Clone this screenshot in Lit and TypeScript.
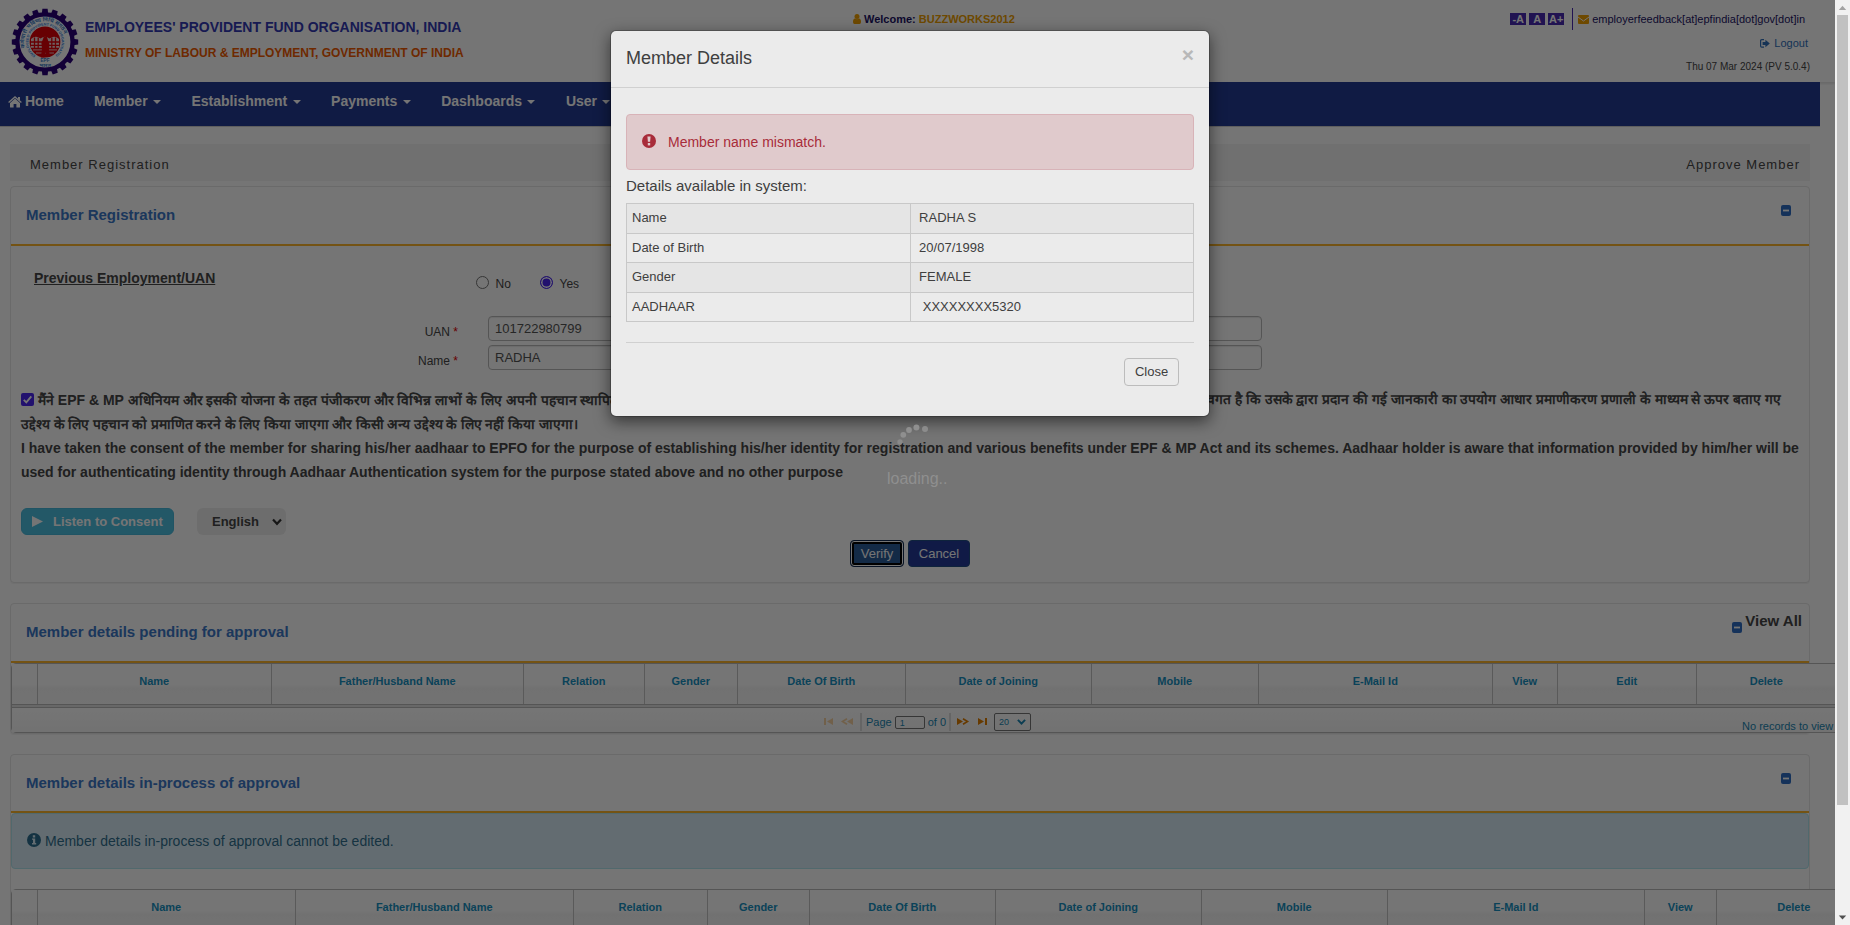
import { LitElement, html, svg, css } from "lit";
import { customElement } from "lit/decorators.js";

type Col = { label: string; w: number };

const MENU = ["Member", "Establishment", "Payments", "Dashboards", "User"];

const PENDING: Col[] = [
  { label: "", w: 26 }, { label: "Name", w: 234 }, { label: "Father/Husband Name", w: 252 },
  { label: "Relation", w: 121 }, { label: "Gender", w: 93 }, { label: "Date Of Birth", w: 168 },
  { label: "Date of Joining", w: 186 }, { label: "Mobile", w: 167 }, { label: "E-Mail Id", w: 234 },
  { label: "View", w: 65 }, { label: "Edit", w: 139 }, { label: "Delete", w: 140 },
];

const IN_PROCESS: Col[] = [
  { label: "", w: 26 }, { label: "Name", w: 258 }, { label: "Father/Husband Name", w: 278 },
  { label: "Relation", w: 134 }, { label: "Gender", w: 102 }, { label: "Date Of Birth", w: 186 },
  { label: "Date of Joining", w: 206 }, { label: "Mobile", w: 186 }, { label: "E-Mail Id", w: 257 },
  { label: "View", w: 72 }, { label: "Delete", w: 155 },
];

const DETAILS: [string, string][] = [
  ["Name", "RADHA S"],
  ["Date of Birth", "20/07/1998"],
  ["Gender", "FEMALE"],
  ["AADHAAR", "\u00a0XXXXXXXX5320"],
];

const minus = html`<svg class="minus" width="10" height="11" viewBox="0 0 10 11"><rect width="10" height="11" rx="2" fill="#2e6fc4"/><rect x="2" y="4.6" width="6" height="1.8" fill="#fff"/></svg>`;
const chevron = (w: number, c: string) => html`<svg class="chev" width=${w} height="8" viewBox="0 0 10 8"><path d="M1 1.6 5 5.8 9 1.6" fill="none" stroke=${c} stroke-width="2.2"/></svg>`;

@customElement("epf-logo")
export class EpfLogo extends LitElement {
  static styles = css`
    :host { display: block; width: 68px; height: 68px; }
    svg { display: block; font-family: "Liberation Sans", "Noto Sans", sans-serif; }
  `;
  render() {
    const teeth = Array.from({ length: 20 }, (_, i) => svg`<path d="M-3.2 -28 -2.6 -33.2H2.6L3.2 -28Z" transform="rotate(${i * 18})" fill="#2a0079"/>`);
    return html`<svg width="68" height="68" viewBox="-34 -34 68 68">
      ${teeth}
      <circle r="27.6" fill="#fff" stroke="#2a0079" stroke-width="4.4"/>
      <defs>
        <path id="outer" d="M-19.2 8A20.8 20.8 0 1 1 19.2 8"/>
        <path id="inner" d="M-9.5 13.6A16.6 16.6 0 1 1 9.5 13.6"/>
      </defs>
      <text font-size="5.6" font-weight="bold" fill="#3f7fc9"><textPath href="#outer" startOffset="3%">कर्मचारी भविष्य निधि संगठन</textPath></text>
      <text font-size="3.6" font-weight="bold" fill="#2f7fe0"><textPath href="#inner">EMPLOYEES' PROVIDENT FUND ORGANISATION</textPath></text>
      <circle r="15.4" fill="#e00008"/>
      <path d="M-14 -3Q-9.5 -7 -4.5 -3.5Q0 -7 4.5 -3.5Q9.5 -7 14 -3V6H-14Z" fill="#f1d5d5"/>
      <path d="M-14 0H14M-14 3.4H14M-10.5 -4.4V6M-6.8 -4.4V6M6.8 -4.4V6M10.5 -4.4V6M-14 6.4H14M-11 9.4H11" stroke="#e00008" stroke-width="1.3" fill="none"/>
      <path d="M-12 7.9H12M-9 11H9" stroke="#f1d5d5" stroke-width=".9"/>
      <path d="M-1.8 -3.5A1.9 1.9 0 1 1 2.4 -3.5L4.4 2 4 8 5 15H1.6L.8 10 -.6 15.4H-4.2L-3 7 -3.6 1Z" fill="#e00008"/>
      <text y="19.6" font-size="4.6" font-weight="bold" fill="#3f7fc9" text-anchor="middle">EPF</text>
      <text y="24.6" font-size="5.4" font-weight="bold" fill="#3f7fc9" text-anchor="middle">भारत</text>
    </svg>`;
  }
}

@customElement("grid-head")
export class GridHead extends LitElement {
  static properties = { cols: { attribute: false } };
  declare cols: Col[];
  static styles = css`
    :host { display: block; }
    .row { display: grid; height: 40px; background: linear-gradient(#fff 0 20px, #f7f7f7 24px, #fafafa); }
    .cell { border-right: 1px solid #c5c5c5; padding-right: 0.5px; text-align: center; font-weight: bold; font-size: 11px; line-height: 35px; color: #1791c2; }
  `;
  render() {
    return html`<div class="row" style="grid-template-columns:${this.cols.map((c) => c.w + "px").join(" ")}">
      ${this.cols.map((c) => html`<div class="cell">${c.label}</div>`)}
    </div>`;
  }
}

@customElement("member-dialog")
export class MemberDialog extends LitElement {
  static styles = css`
    :host { display: block; box-sizing: border-box; width: 600px; height: 387px; background: #fff; background-clip: padding-box; border: 1px solid rgba(0, 0, 0, 0.2); border-radius: 6px; box-shadow: 0 5px 15px rgba(0, 0, 0, 0.5); color: #454545; }
    .head { display: flex; justify-content: space-between; box-sizing: border-box; height: 57px; padding: 15px 15px 0; border-bottom: 1px solid #e2e2e2; font-size: 18px; line-height: 24px; }
    .x { font-size: 21px; font-weight: bold; line-height: 17px; color: #c8c8c8; }
    .body { padding: 26px 15px 0; }
    .alert { display: flex; align-items: center; gap: 12px; box-sizing: border-box; height: 56px; padding: 0 15px; border: 1px solid #ebc3c8; border-radius: 4px; background: #f4dcde; color: #b7303f; font-size: 14px; }
    .alert svg { margin-top: -2px; }
    .cap { font-size: 15px; line-height: 22px; padding: 5px 0 6px; }
    table { width: 568px; border-collapse: collapse; font-size: 13px; table-layout: fixed; }
    td { box-sizing: border-box; height: 30px; padding: 0 5px 1px; border: 1px solid #d9d9d9; }
    tr:nth-child(even) td { height: 29px; padding-bottom: 0; }
    td + td { padding-left: 8.6px; }
    tr:nth-child(odd) td { background: #f9f9f9; }
    .foot { display: flex; justify-content: flex-end; margin-top: 20px; padding: 15px; border-top: 1px solid #e2e2e2; }
    .close { box-sizing: border-box; width: 55px; height: 28px; border: 1px solid #ccc; border-radius: 4px; background: #fff; text-align: center; font-size: 13px; line-height: 26px; }
  `;
  render() {
    return html`
      <div class="head"><span>Member Details</span><span class="x">×</span></div>
      <div class="body">
        <div class="alert">
          <svg width="14" height="14" viewBox="0 0 14 14"><circle cx="7" cy="7" r="7" fill="#b7303f"/><path d="M5.4 2.6H8.6L8.1 7.8H5.9Z" fill="#f4dcde"/><rect x="5.8" y="9" width="2.4" height="2.4" fill="#f4dcde"/></svg>
          <span>Member name mismatch.</span>
        </div>
        <div class="cap">Details available in system:</div>
        <table>${DETAILS.map(([k, v]) => html`<tr><td>${k}</td><td>${v}</td></tr>`)}</table>
        <div class="foot"><div class="close">Close</div></div>
      </div>`;
  }
}

@customElement("app-root")
export class AppRoot extends LitElement {
  static styles = css`
    :host { display: block; position: relative; width: 1850px; height: 925px; overflow: hidden; background: #fff; color: #464646; font-family: "Liberation Sans", Arial, sans-serif; font-size: 13px; line-height: 18px; }
    * { box-sizing: border-box; }
    svg { display: block; flex: none; }
    .page { width: 1835px; height: 925px; overflow: hidden; }

    .header { display: flex; height: 82px; padding: 8px 25px 0 11px; box-shadow: 0 2px 2px rgba(0, 0, 0, 0.1); }
    .brand { display: flex; gap: 6px; width: 842px; }
    .names { display: flex; flex-direction: column; font-weight: bold; white-space: nowrap; }
    .org { font-size: 14px; line-height: 20px; margin-top: 9px; color: #343ab5; }
    .min { font-size: 12px; line-height: 20px; margin-top: 6px; color: #f15a00; }
    .welcome { display: flex; gap: 3px; align-items: flex-start; width: 200px; font-size: 11px; font-weight: bold; line-height: 23px; color: #1d1466; }
    .welcome svg { margin-top: 6px; }
    .welcome b { color: #f0a000; }
    .util { margin-left: auto; display: flex; flex-direction: column; align-items: flex-end; font-size: 11px; }
    .tools { display: flex; align-items: center; height: 22px; padding-right: 5px; color: #1d1466; }
    .fs { width: 16px; height: 12px; margin-right: 3px; background: #482ab5; color: #fff; font-weight: bold; font-size: 11px; line-height: 12px; text-align: center; }
    .bar { width: 1px; height: 22px; margin: 0 5px; background: #482ab5; }
    .mail { margin-right: 3px; }
    .logout { display: flex; align-items: center; gap: 4px; padding-right: 2px; margin-top: 4px; color: #3070bb; }
    .date { font-size: 10px; margin-top: 6px; }

    .nav { display: flex; width: 1820px; height: 45px; padding: 9px 0 0 8px; background: #253d94; border-bottom: 1px solid #d0d0d0; position: relative; color: #fff; font-size: 14px; font-weight: bold; line-height: 20px; }
    .home { display: flex; gap: 3px; margin-right: 30px; }
    .home svg { margin-top: 5px; }
    .menu { display: flex; gap: 5.4px; margin-right: 30.5px; }
    .menu::after { content: ""; align-self: flex-start; margin-top: 9px; border: 4px solid transparent; border-top-color: #fff; border-bottom: 0; }

    .crumb { display: flex; justify-content: space-between; width: 1800px; height: 37px; margin: 17px 0 5px 10px; padding: 0 10px 0 20px; background: #f5f5f5; letter-spacing: 1px; font-size: 13px; line-height: 42px; }

    .panel { width: 1800px; margin: 0 0 20px 10px; border: 1px solid #e6e6e6; border-radius: 4px; box-shadow: 0 1px 1px rgba(0, 0, 0, 0.05); }
    .ph { display: flex; justify-content: space-between; height: 59px; padding: 0 18px 0 15px; border-bottom: 2px solid #fcb72c; font-size: 15px; font-weight: bold; line-height: 56px; color: #3c78c8; }
    .ph .minus { margin-top: 18px; }
    .all { display: flex; gap: 3px; color: #464646; line-height: 34px; margin-right: -11px; }

    .p1 { height: 397px; }
    .form { padding: 0 10px; }
    .radios { display: flex; height: 70px; padding: 23px 0 0 13px; font-size: 12px; }
    .prev { width: 442px; font-size: 14px; font-weight: bold; text-decoration: underline; }
    .radio { display: flex; align-items: flex-start; gap: 6.5px; width: 64px; line-height: 30px; }
    .radio i { width: 13px; height: 13px; margin-top: 7px; border: 1px solid #767676; border-radius: 50%; }
    .radio .on { border: 1.5px solid #4a26f0; background: #4a26f0; box-shadow: inset 0 0 0 1.5px #fff; }
    .field { display: grid; grid-template-columns: 437px 774px; column-gap: 30px; height: 29px; font-size: 12px; line-height: 32px; }
    .field .lab { text-align: right; }
    .field em { color: #e00000; font-style: normal; }
    .input { height: 25px; padding: 0 6px; border: 1px solid #bbb; border-radius: 4px; box-shadow: inset 0 1px 1px rgba(0, 0, 0, 0.08); color: #555; font-size: 13px; line-height: 24px; }

    .consent { margin-top: 14px; font-size: 14px; font-weight: bold; white-space: nowrap; }
    .line { display: flex; height: 24px; line-height: 24px; }
    .line .end { margin-left: auto; margin-right: 18px; }
    .hi { font-size: 13.8px; }
    .hi b { font-size: 14px; }
    .hi2 { line-height: 26px; word-spacing: -0.28px; }
    .cb { margin: 5px 4px 0 0; }
    .actions { display: flex; gap: 23px; margin-top: 24px; font-weight: bold; }
    .listen { display: flex; align-items: center; gap: 10px; width: 153px; height: 27px; padding-left: 10px; border: 1px solid #46b8da; border-radius: 6px; background: #4fc0e0; color: #fff; }
    .lang { display: flex; align-items: center; justify-content: space-between; width: 89px; height: 27px; padding: 0 4px 0 15px; border-radius: 6px; background: #efefef; }
    .btns { display: flex; justify-content: center; gap: 4px; margin-top: 5px; }
    .btn { height: 27px; border: 1px solid #204d84; border-radius: 4px; background: #253a9a; color: #fff; text-align: center; line-height: 25px; width: 62px; }
    .verify { width: 54px; background: #2b5d9a; border-color: #122b50; box-shadow: inset 0 0 0 1px #fff, inset 0 0 0 3px #000; }

    .p2 { height: 131px; }
    .grid { width: 1862px; border: 1px solid #bbb; border-radius: 5px; }
    .gap { height: 4px; border: solid #bbb; border-width: 1px 0; background: #e2e2e2; }
    .pager { display: flex; align-items: center; height: 24px; padding: 3px 0 0 812px; font-size: 11px; color: #1b87b3; background: linear-gradient(#fff, #f8f8f8); }
    .sep { width: 2px; height: 18px; background: #dcdcdc; }
    .s1 { margin: 0 4px 0 6px; }
    .s2 { margin: 0 6px 0 3px; }
    .pg { width: 30px; height: 13px; margin: 1px 3px 0; padding-left: 4px; border: 1px solid #767676; border-radius: 2px; font-size: 9px; line-height: 13px; }
    .sz { display: flex; align-items: center; justify-content: space-between; width: 37px; height: 18px; margin-left: 6px; padding: 0 4px; border: 1px solid #767676; border-radius: 2px; font-size: 9px; }
    .none { margin: 8px 0 0 711px; }

    .p3 { height: 300px; }
    .p3 .ph { height: 58px; }
    .info { display: flex; align-items: center; gap: 4px; height: 56px; margin-bottom: 20px; padding: 0 15px; border: 1px solid #b0e4ee; border-radius: 4px; background: #d9edf7; color: #31708f; font-size: 14px; }
    .info svg { margin-top: -2px; }

    .shade { position: absolute; inset: 0 15px 0 0; background: rgba(0, 0, 0, 0.5); }
    .dialog { position: absolute; left: 610px; top: 30px; }
    .veil { position: absolute; inset: 0 15px 0 0; background: rgba(0, 0, 0, 0.08); }
    .loading { position: absolute; left: 887px; top: 424px; width: 62px; color: #8f8f8f; font-size: 16px; line-height: 20px; }
    .loading svg { margin: 0 0 23px 9px; }
    .scroll { position: absolute; right: 0; top: 0; width: 15px; height: 925px; display: flex; flex-direction: column; align-items: center; justify-content: space-between; background: #f1f1f1; }
    .thumb { width: 11px; height: 790px; background: #c1c1c1; margin-bottom: auto; }
  `;

  render() {
    return html`
      <div class="page">
        <div class="header">
          <div class="brand">
            <epf-logo></epf-logo>
            <div class="names">
              <div class="org">EMPLOYEES' PROVIDENT FUND ORGANISATION, INDIA</div>
              <div class="min">MINISTRY OF LABOUR &amp; EMPLOYMENT, GOVERNMENT OF INDIA</div>
            </div>
          </div>
          <div class="welcome">
            <svg width="8" height="10" viewBox="0 0 8 10"><circle cx="4" cy="2.6" r="2.5" fill="#f0a000"/><path d="M0 8Q0 4.6 2 4.4Q4 6 6 4.4Q8 4.6 8 8Q8 10 6.5 10H1.5Q0 10 0 8Z" fill="#f0a000"/></svg>
            <span>Welcome: <b>BUZZWORKS2012</b></span>
          </div>
          <div class="util">
            <div class="tools">
              <span class="fs">-A</span><span class="fs">A</span><span class="fs">A+</span>
              <span class="bar"></span>
              <svg class="mail" width="11" height="9" viewBox="0 0 11 9"><rect width="11" height="9" rx="1" fill="#f0a000"/><path d="M0 2 5.5 6 11 2" fill="none" stroke="#fff" stroke-width="1"/></svg>
              <span>employerfeedback[at]epfindia[dot]gov[dot]in</span>
            </div>
            <div class="logout">
              <svg width="10" height="9" viewBox="0 0 10 9"><path d="M4 .6H1.8Q.6.6.6 1.8V7Q.6 8.2 1.8 8.2H4" fill="none" stroke="#3070bb" stroke-width="1.2"/><path d="M2.6 3H5.4V.8L9.8 4.5 5.4 8.2V6H2.6Z" fill="#3070bb"/></svg>
              <span>Logout</span>
            </div>
            <div class="date">Thu 07 Mar 2024 (PV 5.0.4)</div>
          </div>
        </div>
        <div class="nav">
          <div class="home">
            <svg width="14" height="12" viewBox="0 0 14 12"><path d="M7 2.6 12 7V11Q12 11.6 11.4 11.6H8.4V8H5.6V11.6H2.6Q2 11.6 2 11V7Z" fill="#fff"/><path d="M.6 6.4 7 .9 13.4 6.4" fill="none" stroke="#fff" stroke-width="1.3"/><path d="M10 1H12V4.6L10 3Z" fill="#fff"/></svg>
            <span>Home</span>
          </div>
          ${MENU.map((m) => html`<div class="menu">${m}</div>`)}
        </div>
        <div class="crumb"><span>Member Registration</span><span>Approve Member</span></div>

        <div class="panel p1">
          <div class="ph"><span>Member Registration</span>${minus}</div>
          <div class="form">
            <div class="radios">
              <div class="prev">Previous Employment/UAN</div>
              <div class="radio"><i></i><span>No</span></div>
              <div class="radio"><i class="on"></i><span>Yes</span></div>
            </div>
            <div class="field"><div class="lab">UAN <em>*</em></div><div class="input">101722980799</div></div>
            <div class="field"><div class="lab">Name <em>*</em></div><div class="input">RADHA</div></div>
            <div class="consent">
              <div class="line">
                <svg class="cb" width="13" height="13" viewBox="0 0 13 13"><rect width="13" height="13" rx="2" fill="#4a26f0"/><path d="M2.8 6.8 5.3 9.3 10.3 3.4" fill="none" stroke="#fff" stroke-width="1.9"/></svg>
                <span class="hi">मैंने <b>EPF &amp; MP</b> अधिनियम और इसकी योजना के तहत पंजीकरण और विभिन्न लाभों के लिए अपनी पहचान स्थापित</span>
                <span class="hi end">अवगत है कि उसके द्वारा प्रदान की गई जानकारी का उपयोग आधार प्रमाणीकरण प्रणाली के माध्यम से ऊपर बताए गए</span>
              </div>
              <div class="line"><span class="hi hi2">उद्देश्य के लिए पहचान को प्रमाणित करने के लिए किया जाएगा और किसी अन्य उद्देश्य के लिए नहीं किया जाएगा।</span></div>
              <div class="line">I have taken the consent of the member for sharing his/her aadhaar to EPFO for the purpose of establishing his/her identity for registration and various benefits under EPF &amp; MP Act and its schemes. Aadhaar holder is aware that information provided by him/her will be</div>
              <div class="line">used for authenticating identity through Aadhaar Authentication system for the purpose stated above and no other purpose</div>
            </div>
            <div class="actions">
              <div class="listen"><svg width="11" height="11" viewBox="0 0 11 11"><path d="M0 0 11 5.5 0 11Z" fill="#fff"/></svg><span>Listen to Consent</span></div>
              <div class="lang"><span>English</span>${chevron(10, "#333")}</div>
            </div>
            <div class="btns"><div class="btn verify">Verify</div><div class="btn">Cancel</div></div>
          </div>
        </div>

        <div class="panel p2">
          <div class="ph"><span>Member details pending for approval</span><span class="all">${minus}<span>View All</span></span></div>
          <div class="grid">
            <grid-head .cols=${PENDING}></grid-head>
            <div class="gap"></div>
            <div class="pager">
              <svg width="30" height="7" viewBox="0 0 30 7" opacity=".35"><path d="M0 0H2V7H0ZM9 0V7L3 3.5Z" fill="#f08a00"/><path d="M29 0V7L23 3.5Z" fill="#f08a00"/><path d="M23 .8 18.5 3.5 23 6.2" fill="none" stroke="#f08a00" stroke-width="1.6"/></svg>
              <span class="sep s1"></span>
              <span>Page</span><span class="pg">1</span><span>of 0</span>
              <span class="sep s2"></span>
              <svg width="31" height="7" viewBox="0 0 31 7"><path d="M0 0V7L6 3.5Z" fill="#e07f00"/><path d="M6 .8 10.5 3.5 6 6.2" fill="none" stroke="#e07f00" stroke-width="1.6"/><path d="M21 0V7L27 3.5ZM28 0H30V7H28Z" fill="#e07f00"/></svg>
              <span class="sz">20${chevron(9, "#1b87b3")}</span>
              <span class="none">No records to view</span>
            </div>
          </div>
        </div>

        <div class="panel p3">
          <div class="ph"><span>Member details in-process of approval</span>${minus}</div>
          <div class="info">
            <svg width="14" height="14" viewBox="0 0 14 14"><circle cx="7" cy="7" r="7" fill="#2c6f90"/><path d="M5.8 2.2H8.2V4.4H5.8ZM5 5.4H8.2V10H9.2V11.4H5V10H6V6.8H5Z" fill="#d9edf7"/></svg>
            <span>Member details in-process of approval cannot be edited.</span>
          </div>
          <div class="grid"><grid-head .cols=${IN_PROCESS}></grid-head></div>
        </div>
      </div>

      <div class="shade"></div>
      <member-dialog class="dialog"></member-dialog>
      <div class="veil"></div>
      <div class="loading">
        <svg width="44" height="22" viewBox="0 0 44 22" fill="#8f8f8f"><circle cx="4" cy="18" r="2.7" opacity=".8"/><circle cx="7.3" cy="10.8" r="2.9"/><circle cx="13" cy="6" r="2.9"/><circle cx="20.4" cy="3.6" r="3"/><circle cx="29" cy="5" r="3" opacity=".9"/></svg>
        <div>loading..</div>
      </div>
      <div class="scroll">
        <svg width="15" height="15" viewBox="0 0 15 15"><path d="M3.8 10H11.2L7.5 5.8Z" fill="#a3a3a3"/></svg>
        <div class="thumb"></div>
        <svg width="15" height="15" viewBox="0 0 15 15"><path d="M3.8 5.4H11.2L7.5 9.6Z" fill="#505050"/></svg>
      </div>`;
  }
}
